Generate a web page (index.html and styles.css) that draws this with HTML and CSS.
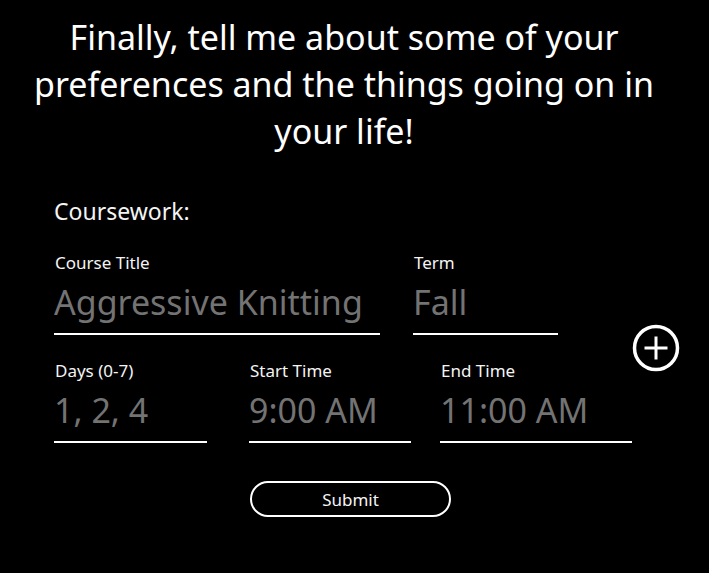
FILE: index.html
```html
<!DOCTYPE html>
<html lang="en">
<head>
<meta charset="utf-8">
<title>Preferences</title>
<link rel="stylesheet" href="styles.css">
</head>
<body>
<main class="page">
  <h1 class="title">Finally, tell me about some of your<br>preferences and the things going on in<br>your life!</h1>
  <section class="section">
    <h2 class="section-title">Coursework:</h2>
    <div class="course">
      <div class="fields">
        <div class="row row-1">
          <label class="field f-title"><span class="label">Course Title</span><input class="input" placeholder="Aggressive Knitting"></label>
          <label class="field f-term"><span class="label">Term</span><input class="input" placeholder="Fall"></label>
        </div>
        <div class="row row-2">
          <label class="field f-days"><span class="label">Days (0-7)</span><input class="input" placeholder="1, 2, 4"></label>
          <label class="field f-start"><span class="label">Start Time</span><input class="input" placeholder="9:00 AM"></label>
          <label class="field f-end"><span class="label">End Time</span><input class="input" placeholder="11:00 AM"></label>
        </div>
      </div>
      <button class="add" type="button" aria-label="Add course">
        <svg width="48" height="48" viewBox="0 0 48 48" fill="none" stroke="#fff">
          <circle cx="24" cy="24" r="21.5" stroke-width="3.5"/>
          <path d="M24 12.5v23M12.5 24h23" stroke-width="3"/>
        </svg>
      </button>
    </div>
    <div class="actions"><button class="submit" type="button">Submit</button></div>
  </section>
</main>
</body>
</html>
```
FILE: styles.css
```css
html, body { margin: 0; background: #000; }
body {
  color: #f4f4f4;
  font-family: "Noto Sans", Roboto, sans-serif;
  width: 709px;
  height: 573px;
  overflow: hidden;
}
.page { padding-top: 14px; }
.title {
  margin: 0;
  padding-right: 21px;
  font-weight: 400;
  font-size: 34px;
  line-height: 47px;
  text-align: center;
  color: #fff;
}
.section { padding-left: 54px; margin-top: 42px; }
.section-title {
  margin: 0;
  font-weight: 400;
  font-size: 23px;
  line-height: 28px;
}
.course {
  display: flex;
  align-items: center;
  margin-top: 28px;
}
.fields { display: flex; flex-direction: column; gap: 26px; }
.row { display: flex; }
.row-1 { gap: 33px; }
.field { display: flex; flex-direction: column; }
.label { font-size: 17px; line-height: 20px; padding-left: 1px; }
.input {
  margin-top: 7px;
  height: 44px;
  padding: 0 0 9px;
  background: transparent;
  border: none;
  border-bottom: 2px solid #fff;
  font-family: inherit;
  font-size: 34px;
  color: #fff;
  outline: none;
  box-sizing: content-box;
}
.input::placeholder { color: #737373; opacity: 1; }
.f-title .input { width: 326px; }
.f-term .input { width: 145px; }
.f-days .input { width: 153px; }
.f-start { margin-left: 42px; }
.f-start .input { width: 162px; }
.f-end { margin-left: 29px; }
.f-end .input { width: 192px; }
.add {
  padding: 0;
  background: none;
  border: none;
  width: 48px;
  height: 48px;
  display: flex;
}
.actions { margin-top: 38px; padding-left: 196px; }
.submit {
  width: 201px;
  height: 36px;
  border: 2px solid #fff;
  border-radius: 18px;
  background: #000;
  color: #f4f4f4;
  font-family: inherit;
  font-size: 17px;
}
```
